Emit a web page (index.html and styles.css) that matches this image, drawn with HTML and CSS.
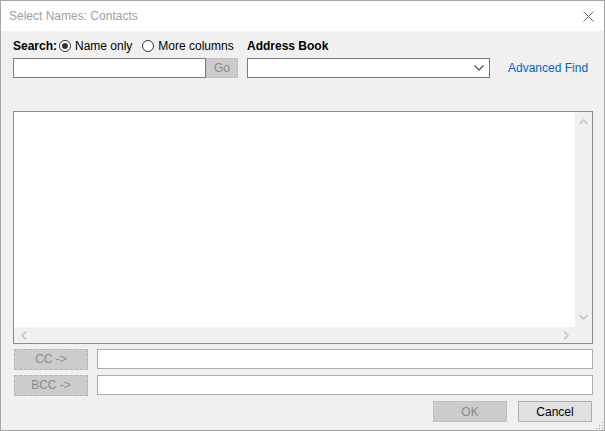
FILE: index.html
```html
<!DOCTYPE html>
<html>
<head>
<meta charset="utf-8">
<link rel="stylesheet" href="styles.css">
</head>
<body>
<div class="window">
  <div class="titlebar">
    <span class="title">Select Names: Contacts</span>
    <svg class="close" width="11" height="11" viewBox="0 0 11 11"><path d="M0.5 0.5 L10.5 10.5 M10.5 0.5 L0.5 10.5" stroke="#6e6e6e" stroke-width="1" fill="none"/></svg>
  </div>
  <div class="content">
    <div class="row labels">
      <div class="search-group">
        <span class="bold search-label">Search:</span>
        <span class="radio checked"></span><span class="radio-text">Name only</span>
        <span class="radio"></span><span class="radio-text">More columns</span>
      </div>
      <span class="bold ab-label">Address Book</span>
    </div>
    <div class="row inputs">
      <div class="textbox search-box"></div>
      <div class="btn go">Go</div>
      <div class="textbox select">
        <svg width="10" height="6" viewBox="0 0 10 6"><path d="M0.5 0.5 L5 5 L9.5 0.5" stroke="#444" stroke-width="1.1" fill="none"/></svg>
      </div>
      <span class="link">Advanced Find</span>
    </div>
    <div class="listbox">
      <div class="list-main">
        <div class="list-area"></div>
        <div class="vscroll">
          <svg width="9" height="6" viewBox="0 0 9 6"><path d="M0.5 5 L4.5 1 L8.5 5" stroke="#c2c2c2" stroke-width="1.5" fill="none"/></svg>
          <svg width="9" height="6" viewBox="0 0 9 6"><path d="M0.5 1 L4.5 5 L8.5 1" stroke="#c2c2c2" stroke-width="1.5" fill="none"/></svg>
        </div>
      </div>
      <div class="hscroll">
        <svg width="6" height="9" viewBox="0 0 6 9"><path d="M5 0.5 L1 4.5 L5 8.5" stroke="#c2c2c2" stroke-width="1.5" fill="none"/></svg>
        <svg width="6" height="9" viewBox="0 0 6 9"><path d="M1 0.5 L5 4.5 L1 8.5" stroke="#c2c2c2" stroke-width="1.5" fill="none"/></svg>
        <div class="corner"></div>
      </div>
    </div>
    <div class="row recip first">
      <div class="btn side">CC -&gt;</div>
      <div class="textbox recip-box"></div>
    </div>
    <div class="row recip">
      <div class="btn side">BCC -&gt;</div>
      <div class="textbox recip-box"></div>
    </div>
    <div class="row footer">
      <div class="btn dlg disabled">OK</div>
      <div class="btn dlg cancel">Cancel</div>
    </div>
  </div>
  <svg class="grip" width="9" height="9" viewBox="0 0 9 9">
    <rect x="7" y="1" width="1" height="1" fill="#9a9a9a"/>
    <rect x="4" y="4" width="1" height="1" fill="#9a9a9a"/>
    <rect x="7" y="4" width="1" height="1" fill="#9a9a9a"/>
    <rect x="1" y="7" width="1" height="1" fill="#9a9a9a"/>
    <rect x="4" y="7" width="1" height="1" fill="#9a9a9a"/>
    <rect x="7" y="7" width="1" height="1" fill="#9a9a9a"/>
  </svg>
</div>
</body>
</html>
```
FILE: styles.css
```css
* { box-sizing: border-box; }
html, body { margin: 0; padding: 0; }
body {
  font-family: "Liberation Sans", Arial, sans-serif;
  font-size: 12px;
  color: #000;
  background: #f0f0f0;
}
.window {
  position: relative;
  width: 605px;
  height: 431px;
  border: 1px solid #a6a6a6;
  background: #f0f0f0;
}
.titlebar {
  height: 30px;
  background: #fff;
  display: flex;
  align-items: center;
  justify-content: space-between;
  padding: 0 9px 0 8px;
}
.title { color: #a0a0a0; font-size: 12px; }
.close { margin-right: 1px; }
.content {
  padding: 0 11px 0 12px;
}
.row { display: flex; align-items: center; }
.labels { height: 16px; margin-top: 7px; }
.search-group {
  width: 234px;
  display: flex;
  align-items: center;
}
.bold { font-weight: bold; }
.search-label { width: 46px; }
.radio {
  width: 12px; height: 12px;
  border: 1px solid #333;
  border-radius: 50%;
  background: #fff;
  display: inline-flex;
  align-items: center;
  justify-content: center;
  flex: none;
}
.radio.checked::after {
  content: "";
  width: 6px; height: 6px;
  border-radius: 50%;
  background: #333;
}
.radio-text { margin-left: 4px; margin-right: 10px; white-space: nowrap; }
.ab-label { white-space: nowrap; }
.inputs { height: 20px; margin-top: 4px; }
.textbox {
  height: 20px;
  background: #fff;
  border: 1px solid #7a7a7a;
}
.search-box { width: 193px; }
.btn {
  display: flex;
  align-items: center;
  justify-content: center;
  font-size: 12px;
}
.go {
  width: 32px; height: 20px;
  background: #cccccc;
  border: 1px solid #bfbfbf;
  color: #8a8a8a;
}
.select {
  width: 243px;
  margin-left: 9px;
  display: flex;
  align-items: center;
  justify-content: flex-end;
  padding-right: 5px;
}
.link { color: #0066cc; margin-left: 18px; }
.listbox {
  margin-top: 33px;
  width: 580px;
  height: 233px;
  border: 1px solid #8c8c8c;
  background: #fff;
  display: flex;
  flex-direction: column;
}
.list-main { flex: 1; display: flex; }
.list-area { flex: 1; background: #fff; }
.vscroll {
  width: 17px;
  background: #f0f0f0;
  display: flex;
  flex-direction: column;
  justify-content: space-between;
  align-items: center;
  padding: 7px 0 7px;
}
.hscroll {
  height: 16px;
  background: #f0f0f0;
  display: flex;
  align-items: center;
  padding-left: 7px;
}
.hscroll svg:nth-child(2) { margin-left: auto; margin-right: 6px; }
.corner { width: 17px; height: 16px; }
.recip { height: 21px; margin-top: 5px; }
.recip.first { margin-top: 4px; }
.side {
  width: 74px; height: 21px;
  margin-left: 1px;
  background: #cccccc;
  border: 1px dashed #b4b4b4;
  color: #8a8a8a;
  margin-top: 1px;
}
.recip-box {
  width: 496px;
  margin-left: 9px;
  border-color: #adadad;
}
.footer {
  justify-content: flex-end;
  margin-top: 6px;
  gap: 11px;
  padding-right: 1px;
}
.dlg {
  width: 74px; height: 21px;
  border: 1px solid #adadad;
  background: #e1e1e1;
}
.dlg.disabled {
  background: #cccccc;
  border-color: #bfbfbf;
  color: #8a8a8a;
}
.grip { position: absolute; right: 0; bottom: 0; }
```
